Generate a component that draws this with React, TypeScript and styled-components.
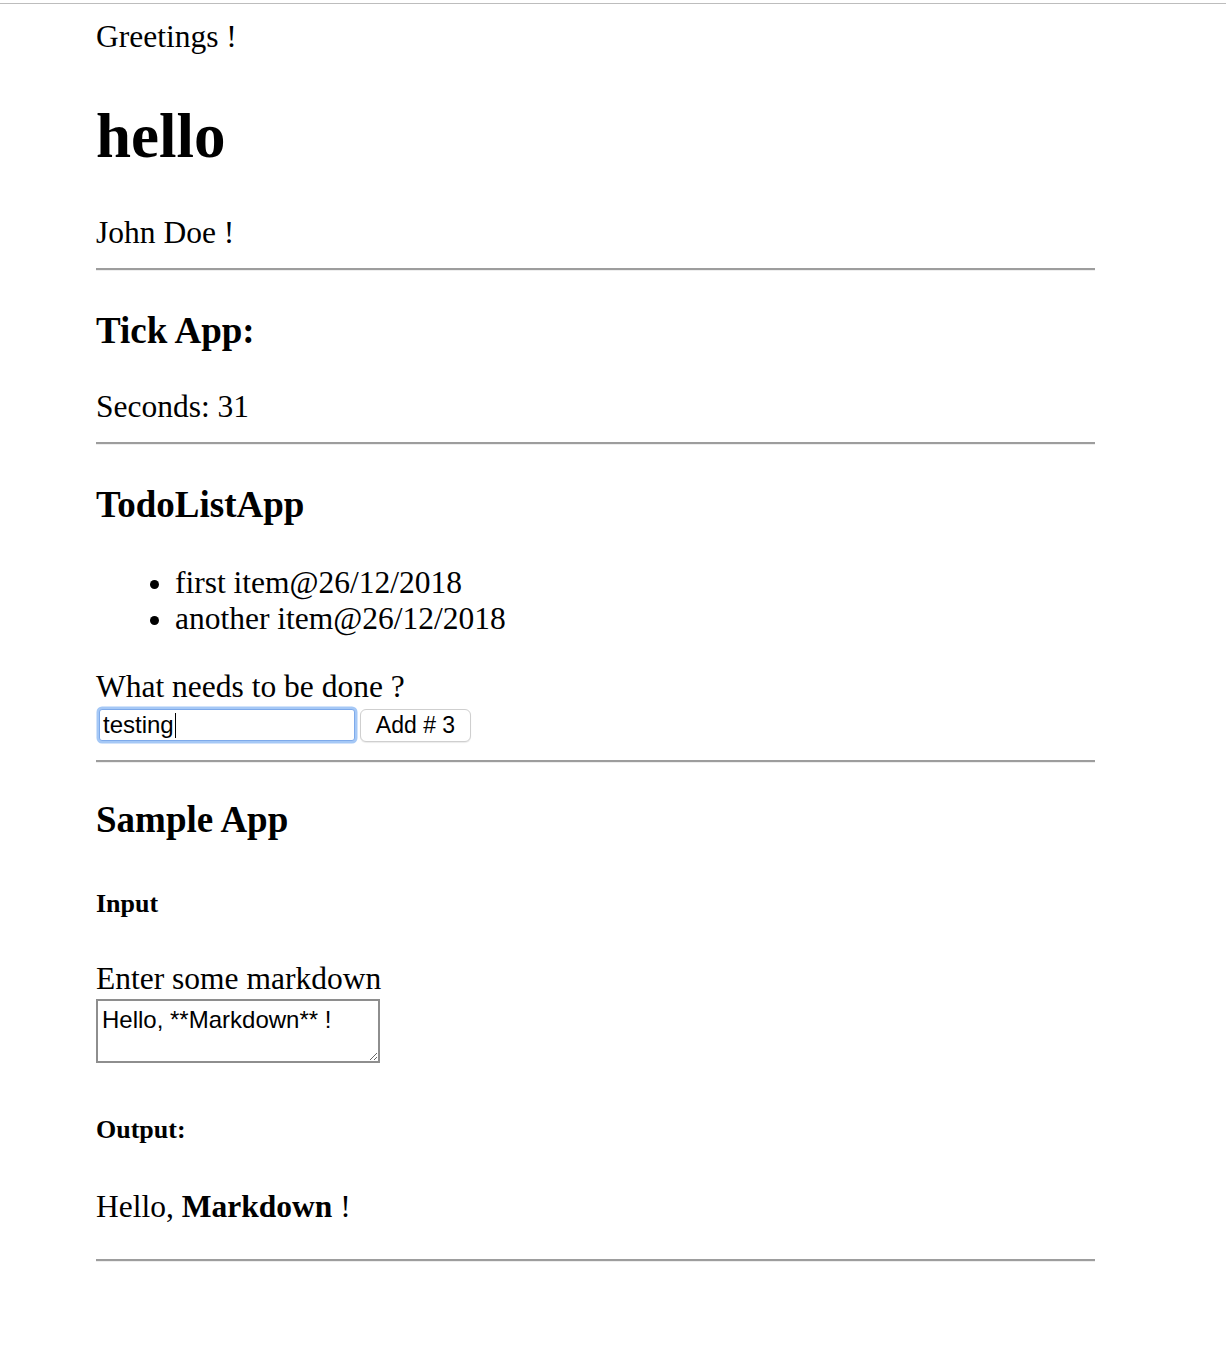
import React from "react";
import styled, { createGlobalStyle } from "styled-components";

const Global = createGlobalStyle`
  html, body { margin: 0; padding: 0; background: #ffffff; }
  body { font-family: "Liberation Serif", "Times New Roman", serif; color: #000; }
`;

const Page = styled.div`
  padding-top: 3px;
  min-height: 1361px;
  background: #fff;
`;

const Frame = styled.main`
  border-top: 1px solid #bdbdbd;
  padding: 0 131px 40px 96px;
  display: flow-root;
`;

const Text = styled.p<{ $top?: number }>`
  margin: ${(p) => p.$top ?? 40}px 0 0;
  font-size: 31.5px;
  line-height: 36px;
`;

const Title = styled.h1<{ $top?: number }>`
  margin: ${(p) => p.$top ?? 45}px 0 0;
  font-size: 63px;
  line-height: 72px;
  font-weight: bold;
`;

const SectionTitle = styled.h3<{ $top?: number }>`
  margin: ${(p) => p.$top ?? 39}px 0 0;
  font-size: 37px;
  line-height: 42px;
  font-weight: bold;
`;

const SubTitle = styled.h5<{ $top?: number }>`
  margin: ${(p) => p.$top ?? 48}px 0 0;
  font-size: 26px;
  line-height: 30px;
  font-weight: bold;
`;

const Rule = styled.hr<{ $top?: number }>`
  margin: ${(p) => p.$top ?? 17}px 0 0;
  height: 0;
  border: none;
  border-top: 2px solid #9d9d9d;
  border-bottom: 1px solid #eeeeee;
`;

const List = styled.ul`
  margin: 39px 0 0;
  padding-left: 79px;
  font-size: 31.5px;
  line-height: 36px;
`;

const Item = styled.li``;

const Label = styled.label<{ $top?: number }>`
  display: block;
  margin-top: ${(p) => p.$top ?? 32}px;
  font-size: 31.5px;
  line-height: 36px;
`;

const FormRow = styled.div`
  display: flex;
  align-items: center;
  gap: 4px;
  margin-top: 1px;
  height: 38px;
`;

const FakeInput = styled.div`
  box-sizing: border-box;
  margin-left: 3px;
  width: 256px;
  height: 32px;
  border: 1px solid #7eaaea;
  border-radius: 3px;
  box-shadow: 0 0 0 2.5px #a5c8f6;
  display: flex;
  align-items: center;
  padding-left: 3px;
  font-family: "Liberation Sans", Arial, sans-serif;
  font-size: 24px;
  background: #fff;
`;

const Caret = styled.span`
  display: inline-block;
  width: 1px;
  height: 25px;
  background: #000;
  margin-left: 1px;
`;

const Button = styled.button`
  box-sizing: border-box;
  margin-left: 1px;
  width: 111px;
  height: 33px;
  border: 1px solid #cfcfcf;
  border-radius: 6px;
  background: #fff;
  box-shadow: 0 1px 1px rgba(0, 0, 0, 0.08);
  font-family: "Liberation Sans", Arial, sans-serif;
  font-size: 23px;
  color: #000;
  padding: 0;
`;

const TextArea = styled.textarea`
  display: block;
  box-sizing: border-box;
  margin-top: 2px;
  width: 284px;
  height: 64px;
  border: 2px solid #8e8e8e;
  padding: 5px 4px;
  font-family: "Liberation Sans", Arial, sans-serif;
  font-size: 24px;
  line-height: 28px;
  color: #000;
  background: #fff;
  outline: none;
`;

const Strong = styled.strong`
  font-weight: bold;
`;

export default function App() {
  return (
    <Page>
      <Global />
      <Frame>
        <Text $top={15}>Greetings !</Text>
        <Title>hello</Title>
        <Text $top={43}>John Doe !</Text>
        <Rule />

        <section>
          <SectionTitle>Tick App:</SectionTitle>
          <Text $top={37}>Seconds: 31</Text>
          <Rule />
        </section>

        <section>
          <SectionTitle>TodoListApp</SectionTitle>
          <List>
            <Item>first item@26/12/2018</Item>
            <Item>another item@26/12/2018</Item>
          </List>
          <Label>What needs to be done ?</Label>
          <FormRow>
            <FakeInput>
              testing
              <Caret />
            </FakeInput>
            <Button type="button">Add # 3</Button>
          </FormRow>
          <Rule $top={16} />
        </section>

        <section>
          <SectionTitle $top={36}>Sample App</SectionTitle>
          <SubTitle>Input</SubTitle>
          <Label $top={42}>Enter some markdown</Label>
          <TextArea defaultValue="Hello, **Markdown** !" />
          <SubTitle $top={52}>Output:</SubTitle>
          <Text $top={44}>
            Hello, <Strong>Markdown</Strong> !
          </Text>
          <Rule $top={34} />
        </section>
      </Frame>
    </Page>
  );
}
